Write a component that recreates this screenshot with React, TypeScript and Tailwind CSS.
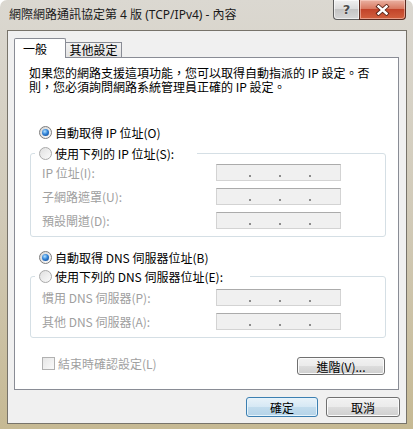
import React from 'react';

const Radio: React.FC<{ checked?: boolean }> = ({ checked }) => (
  <span
    className={`flex h-[13px] w-[13px] shrink-0 items-center justify-center rounded-full border ${
      checked
        ? 'border-[#7d7d7d] bg-[linear-gradient(135deg,#d4d4d4,#fdfdfd)]'
        : 'border-[#a9a9a9] bg-[linear-gradient(135deg,#e0e0e0,#fbfbfb)]'
    }`}
  >
    {checked && (
      <span className="h-[7px] w-[7px] rounded-full bg-[radial-gradient(circle_at_40%_35%,#b4e2ff_0%,#3284d8_45%,#0b3a80_100%)]" />
    )}
  </span>
);

const IpBox = () => (
  <div className="flex h-[17px] w-[125px] items-end border border-[#d3d3d3] border-t-[#ababab] bg-[#f0f0f0] pb-[3px] pl-[32px]">
    <span className="h-[2px] w-[2px] bg-[#8c8c8c]" />
    <span className="ml-[28px] h-[2px] w-[2px] bg-[#8c8c8c]" />
    <span className="ml-[28px] h-[2px] w-[2px] bg-[#8c8c8c]" />
  </div>
);

const Field: React.FC<{ label: string }> = ({ label }) => (
  <div className="flex h-[17px] items-center">
    <span className="w-[174px] text-[#a0a0a0]">{label}</span>
    <IpBox />
  </div>
);

const RadioRow: React.FC<{ checked?: boolean; label: string }> = ({ checked, label }) => (
  <div className="flex h-[16px] items-center">
    <Radio checked={checked} />
    <span className="ml-[3px] whitespace-nowrap">{label}</span>
  </div>
);

export default function App() {
  return (
    <div className="flex h-[429px] w-[413px] flex-col rounded-t-[7px] bg-linear-to-b from-[#dbd8d1] via-[#d1cab8] to-[#c6b993] font-['Noto_Sans_CJK_TC',sans-serif] text-[12px] leading-[13px] text-black">
      {/* title bar */}
      <div className="flex h-[30px] items-start pr-[7px]">
        <span className="pl-[9px] pt-[7px] font-['Noto_Sans','Noto_Sans_CJK_TC',sans-serif] text-[12px] leading-[16px] text-[#1a1a1a]">
          網際網路通訊協定第 4 版 (TCP/IPv4) - 內容
        </span>
        <div className="ml-auto flex">
          <div className="flex h-[20px] w-[26px] items-center justify-center rounded-bl-[4px] border border-t-0 border-r-0 border-[#5e5e5e] bg-[linear-gradient(#f0f0f0_0%,#dcdcdc_45%,#c4c4c4_50%,#d6d6d6_100%)] shadow-[inset_0_0_0_1px_rgba(255,255,255,0.6)]">
            <span className="font-['DejaVu_Sans',sans-serif] text-[13px] font-bold leading-[14px] text-[#4c4c4c] [text-shadow:0_0_2px_#fff]">?</span>
          </div>
          <div className="flex h-[20px] w-[47px] items-center justify-center rounded-br-[4px] border border-t-0 border-[#5a2a20] bg-[linear-gradient(#eab2a2_0%,#d97a62_45%,#c2442a_50%,#d2603e_100%)] shadow-[inset_0_0_0_1px_rgba(255,220,210,0.5)]">
            <svg width="15" height="12" viewBox="0 0 15 12">
              <path d="M3.5 2.5 L11.5 9.5 M11.5 2.5 L3.5 9.5" stroke="#5a2418" strokeWidth="4.2" strokeLinecap="square" />
              <path d="M3.5 2.5 L11.5 9.5 M11.5 2.5 L3.5 9.5" stroke="#ffffff" strokeWidth="2.4" strokeLinecap="square" />
            </svg>
          </div>
        </div>
      </div>

      {/* client area */}
      <div className="ml-[7px] flex h-[394px] w-[400px] flex-col border border-[#77736a] bg-[#f0f0f0] pl-[6px]">
        {/* tabs */}
        <div className="relative z-10 mt-[7px] flex h-[20px] items-end">
          <div className="h-[20px] w-[52px] rounded-t-[2px] border border-b-0 border-[#898c95] bg-white pl-[8px] pt-[3px]">
            一般
          </div>
          <div className="flex h-[16px] w-[56px] items-center justify-center border border-l-0 border-[#898c95] bg-[linear-gradient(#f2f2f2,#e3e3e3)] pb-[1px]">
            其他設定
          </div>
        </div>

        {/* tab page */}
        <div className="-mt-[1px] flex h-[333px] w-[385px] flex-col border border-[#898c95] bg-white pl-[14px] pt-[8px]">
          <p className="whitespace-nowrap leading-[14px]">
            如果您的網路支援這項功能，您可以取得自動指派的 IP 設定。否
            <br />
            則，您必須詢問網路系統管理員正確的 IP 設定。
          </p>

          <div className="mt-[30px] pl-[10px]">
            <RadioRow checked label="自動取得 IP 位址(O)" />
          </div>

          <fieldset className="ml-[1px] mt-[5px] w-[356px] rounded-[3px] border border-[#d5dfe5] pb-[7px]">
            <legend className="ml-[4px] w-[162px] bg-white pl-[4px]">
              <RadioRow label="使用下列的 IP 位址(S):" />
            </legend>
            <div className="flex flex-col gap-[7px] pl-[11px] pt-[3px]">
              <Field label="IP 位址(I):" />
              <Field label="子網路遮罩(U):" />
              <Field label="預設閘道(D):" />
            </div>
          </fieldset>

          <div className="mt-[12px] pl-[10px]">
            <RadioRow checked label="自動取得 DNS 伺服器位址(B)" />
          </div>

          <fieldset className="ml-[1px] mt-[3px] w-[356px] rounded-[3px] border border-[#d5dfe5] pb-[7px]">
            <legend className="ml-[4px] w-[215px] bg-white pl-[4px]">
              <RadioRow label="使用下列的 DNS 伺服器位址(E):" />
            </legend>
            <div className="flex flex-col gap-[7px] pl-[11px] pt-[5px]">
              <Field label="慣用 DNS 伺服器(P):" />
              <Field label="其他 DNS 伺服器(A):" />
            </div>
          </fieldset>

          <div className="ml-[1px] mt-[19px] flex w-[356px] items-start pl-[12px] pr-[1px]">
            <span className="h-[13px] w-[13px] shrink-0 border border-[#b1b1b1] bg-[linear-gradient(135deg,#e6e6e6,#fafafa)]" />
            <span className="ml-[3px] text-[#a0a0a0]">結束時確認設定(L)</span>
            <button className="ml-auto flex h-[18px] w-[88px] items-center justify-center rounded-[3px] border border-[#707070] bg-[linear-gradient(#f2f2f2_0%,#ebebeb_49%,#dddddd_50%,#cfcfcf_100%)] text-[12px] leading-[13px] shadow-[inset_0_0_0_1px_#fbfbfb]">
              進階(V)...
            </button>
          </div>
        </div>

        {/* dialog buttons */}
        <div className="mt-[7px] flex justify-end gap-[8px] pr-[6px]">
          <button className="flex h-[20px] w-[72px] items-center justify-center rounded-[3px] border border-[#3c7fb1] bg-[linear-gradient(#e8f2f9_0%,#d6e8f4_49%,#c2dced_50%,#b5d3e8_100%)] text-[12px] leading-[13px] shadow-[inset_0_0_0_1px_#e6f4fc]">
            確定
          </button>
          <button className="flex h-[20px] w-[74px] items-center justify-center rounded-[3px] border border-[#707070] bg-[linear-gradient(#f2f2f2_0%,#ebebeb_49%,#dddddd_50%,#cfcfcf_100%)] text-[12px] leading-[13px] shadow-[inset_0_0_0_1px_#fbfbfb]">
            取消
          </button>
        </div>
      </div>
    </div>
  );
}
